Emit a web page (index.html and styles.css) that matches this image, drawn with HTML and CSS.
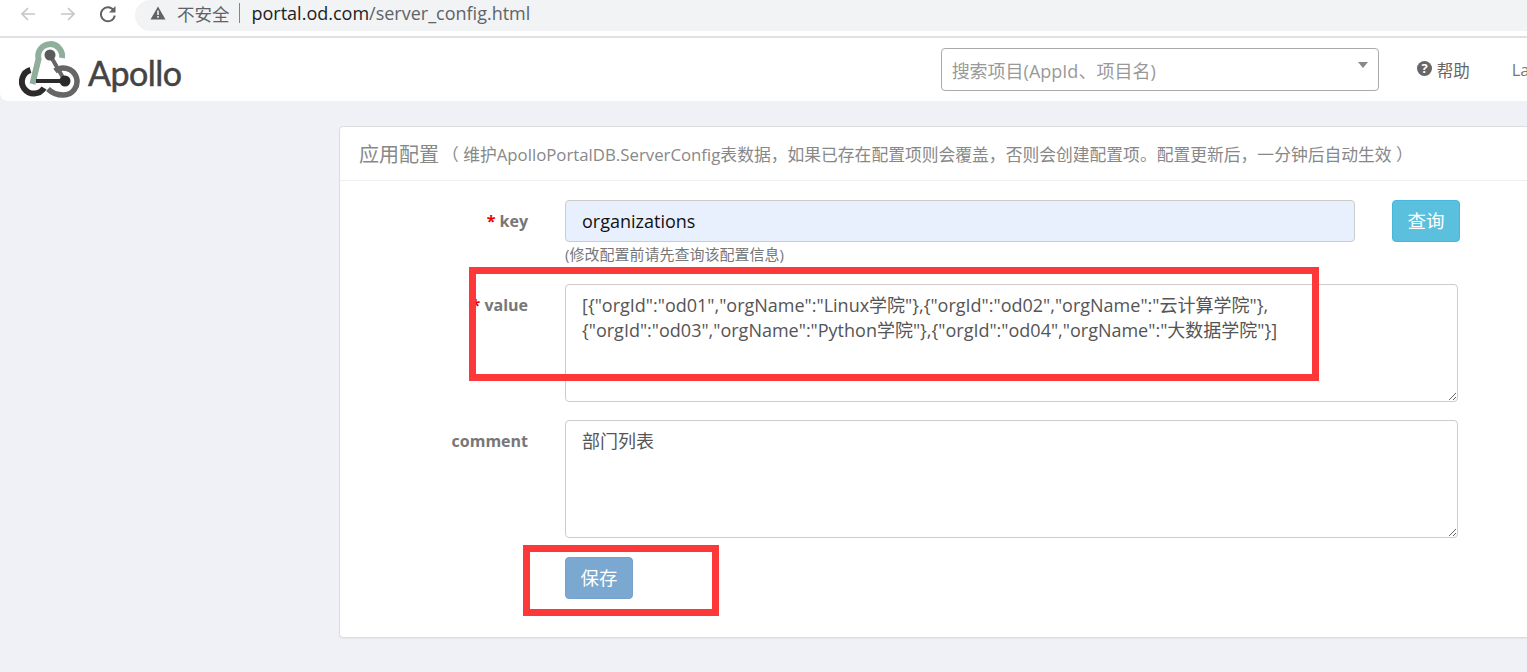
FILE: index.html
```html
<!DOCTYPE html>
<html lang="zh">
<head>
<meta charset="utf-8">
<title>Apollo</title>
<link rel="stylesheet" href="styles.css">
</head>
<body>
<div class="browser">
  <svg class="nav-icon" width="20" height="20" viewBox="0 0 20 20"><path d="M17 10H4M10 4l-6 6 6 6" fill="none" stroke="#c4c7cb" stroke-width="1.7"/></svg>
  <svg class="nav-icon" width="20" height="20" viewBox="0 0 20 20"><path d="M3 10h13M10 4l6 6-6 6" fill="none" stroke="#c4c7cb" stroke-width="1.7"/></svg>
  <svg class="nav-icon" width="20" height="20" viewBox="0 0 20 20"><path d="M15.600 6.200A7 7 0 1 0 16.800 11.500" fill="none" stroke="#5f6368" stroke-width="1.900"/><path d="M17.500 2V8.500H11z" fill="#5f6368"/></svg>
  <div class="address">
    <svg class="warn" width="16" height="14" viewBox="0 0 16 14"><path d="M8 0.500l7.500 13H0.500z" fill="#5f6368"/><path d="M7.200 4.500h1.600v4.500H7.200zM7.200 10h1.600v1.800H7.200z" fill="#f1f3f4"/></svg>
    <span class="insecure">不安全</span>
    <span class="divider"></span>
    <span class="host">portal.od.com</span><span class="path">/server_config.html</span>
  </div>
</div>

<header class="navbar">
  <svg class="logo" width="64" height="61" viewBox="0 0 64 61">
    <path d="M39 32A13.500 13.500 0 1 1 47 56Q38 56 32 50" fill="none" stroke="#666" stroke-width="5.500"/>
    <path d="M14.500 31A12 12 0 1 0 28 49" fill="none" stroke="#2b2b2b" stroke-width="6"/>
    <path d="M46 19A12 12 0 1 0 22.500 20L16.500 45" fill="none" stroke="#8fae9c" stroke-width="6"/>
    <path d="M34 16 49 42" fill="none" stroke="#666" stroke-width="4"/>
    <circle cx="34" cy="16" r="5.500" fill="#5a5a5a"/>
    <path d="M20 42H49" fill="none" stroke="#2b2b2b" stroke-width="4"/>
    <circle cx="49" cy="42" r="5.500" fill="#2b2b2b"/>
  </svg>
  <span class="brand">Apollo</span>
  <div class="search">
    <span class="search-text">搜索项目(AppId、项目名)</span>
    <span class="caret"></span>
  </div>
  <a class="nav-link help">
    <svg class="help-icon" width="17" height="17" viewBox="0 0 17 17"><circle cx="8.500" cy="8.500" r="7.500" fill="#666"/><text class="help-q" x="8.500" y="13" text-anchor="middle">?</text></svg>
    帮助
  </a>
  <a class="nav-link lang">Language</a>
</header>

<main class="content">
  <section class="panel">
    <div class="panel-head">
      <span class="panel-title">应用配置</span>
      <span class="panel-sub">（ 维护ApolloPortalDB.ServerConfig表数据，如果已存在配置项则会覆盖，否则会创建配置项。配置更新后，一分钟后自动生效 ）</span>
    </div>
    <form class="form">
      <div class="row row-key">
        <label class="label"><span class="req">*</span> key</label>
        <div class="field">
          <div class="key-line">
            <input class="input" type="text" value="organizations">
            <button class="btn btn-info" type="button">查询</button>
          </div>
          <small class="hint">(修改配置前请先查询该配置信息)</small>
        </div>
      </div>
      <div class="row row-value">
        <label class="label"><span class="req">*</span> value</label>
        <textarea class="area">[{"orgId":"od01","orgName":"Linux学院"},{"orgId":"od02","orgName":"云计算学院"},
{"orgId":"od03","orgName":"Python学院"},{"orgId":"od04","orgName":"大数据学院"}]</textarea>
      </div>
      <div class="row row-comment">
        <label class="label">comment</label>
        <textarea class="area">部门列表</textarea>
      </div>
      <div class="row row-save">
        <span class="label"></span>
        <button class="btn btn-save" type="button">保存</button>
      </div>
    </form>
  </section>
</main>

<div class="mark mark-value"></div>
<div class="mark mark-save"></div>
</body>
</html>
```
FILE: styles.css
```css
* { box-sizing: border-box; }
html, body { margin: 0; height: 100%; overflow: hidden; }
body {
  background: #eff1f6;
  font-family: "Open Sans", "Noto Sans CJK SC", sans-serif;
  color: #666;
  position: relative;
}
.browser {
  height: 38px;
  background: #fff;
  border-bottom: 2px solid #dfe1e5;
  display: flex;
  align-items: flex-start;
  padding: 4px 0 0 18px;
  gap: 20px;
}
.address {
  margin: -4px 0 0 -3px;
  flex: 1;
  height: 31px;
  background: #f1f3f4;
  border-radius: 16px 0 0 16px;
  display: flex;
  align-items: center;
  padding: 0 0 5px 15px;
  font-size: 18px;
}
.warn { margin-right: 11px; }
.insecure { color: #5f6368; font-size: 17.500px; }
.divider { width: 1px; height: 20px; background: #80868b; margin: 0 12px 0 9px; }
.host { color: #202124; }
.path { color: #5f6368; }

.navbar {
  height: 63px;
  background: #fff;
  border-radius: 0 0 0 8px;
  display: flex;
  align-items: center;
  padding-left: 16px;
  overflow: hidden;
}
.logo { flex: none; }
.brand {
  font-family: "Lato", sans-serif;
  font-size: 34px;
  color: #444;
  margin: 6px 0 0 8px;
  letter-spacing: -0.5px;
  line-height: 1;
  -webkit-text-stroke: 0.5px #444;
}
.search {
  margin-left: 759px;
  width: 438px;
  height: 43px;
  flex: none;
  border: 1px solid #aaa;
  border-radius: 4px;
  display: flex;
  align-items: center;
  justify-content: space-between;
  padding: 0 10px;
}
.search-text { color: #999; font-size: 18px; }
.caret {
  width: 0;
  height: 0;
  margin-bottom: 9px;
  border-left: 5px solid transparent;
  border-right: 5px solid transparent;
  border-top: 6px solid #888;
}
.nav-link { font-size: 16.500px; color: #777; flex: none; white-space: nowrap; }
.help { display: flex; align-items: center; gap: 4px; margin-left: 37px; color: #666; }
.help-icon { margin-bottom: 2px; }
.help-q { fill: #fff; font-size: 13px; font-weight: 700; font-family: "Open Sans", sans-serif; }
.lang { margin-left: 42px; }

.content { padding: 25px 0 0 339px; }
.panel {
  width: 1300px;
  height: 512px;
  background: #fff;
  border: 1px solid #ddd;
  border-radius: 4px;
  box-shadow: 0 1px 1px rgba(0,0,0,.05);
}
.panel-head {
  height: 54px;
  border-bottom: 1px solid #eeeff3;
  display: flex;
  align-items: center;
  padding-left: 19px;
  white-space: nowrap;
  color: #888;
}
.panel-title { font-size: 20px; }
.panel-sub { font-size: 16.800px; margin-left: 3px; }

.form { padding-top: 19px; }
.row {
  display: grid;
  grid-template-columns: 188px auto;
  column-gap: 37px;
  align-items: start;
}
.label {
  text-align: right;
  font-size: 16px;
  font-weight: 700;
  color: #777;
  padding-top: 10px;
}
.req { color: #e00; }
.row-value { margin-top: 20px; }
.row-comment { margin-top: 18px; }
.row-save { margin-top: 19px; }
.row-save .label { padding-top: 0; }

.key-line { display: flex; gap: 37px; }
.input {
  width: 790px;
  height: 42px;
  background: #e8f0fe;
  border: 1px solid #ccc;
  border-radius: 4px;
  padding: 0 16px;
  font: 18px "Open Sans", "Noto Sans CJK SC", sans-serif;
  color: #111;
}
.hint { display: block; font-size: 15px; color: #777; margin-top: 2px; line-height: 20px; }
.area {
  display: block;
  width: 893px;
  height: 118px;
  border: 1px solid #ccc;
  border-radius: 4px;
  padding: 8px 16px;
  font: 18px/25px "Open Sans", "Noto Sans CJK SC", sans-serif;
  color: #555;
  background: #fff;
  overflow: hidden;
}
.btn {
  width: 68px;
  height: 42px;
  border-radius: 4px;
  color: #fff;
  font: 18.500px "Noto Sans CJK SC", sans-serif;
  padding: 0 0 2px;
}
.btn-info { background: #5bc0de; border: 1px solid #46b8da; }
.btn-save { background: #7ba8d0; border: 1px solid #74a2ca; }

.mark {
  position: absolute;
  border: 7px solid #fd3838;
  pointer-events: none;
}
.mark-value { left: 469px; top: 267px; width: 850px; height: 114px; }
.mark-save { left: 523px; top: 545px; width: 196px; height: 71px; }
```
